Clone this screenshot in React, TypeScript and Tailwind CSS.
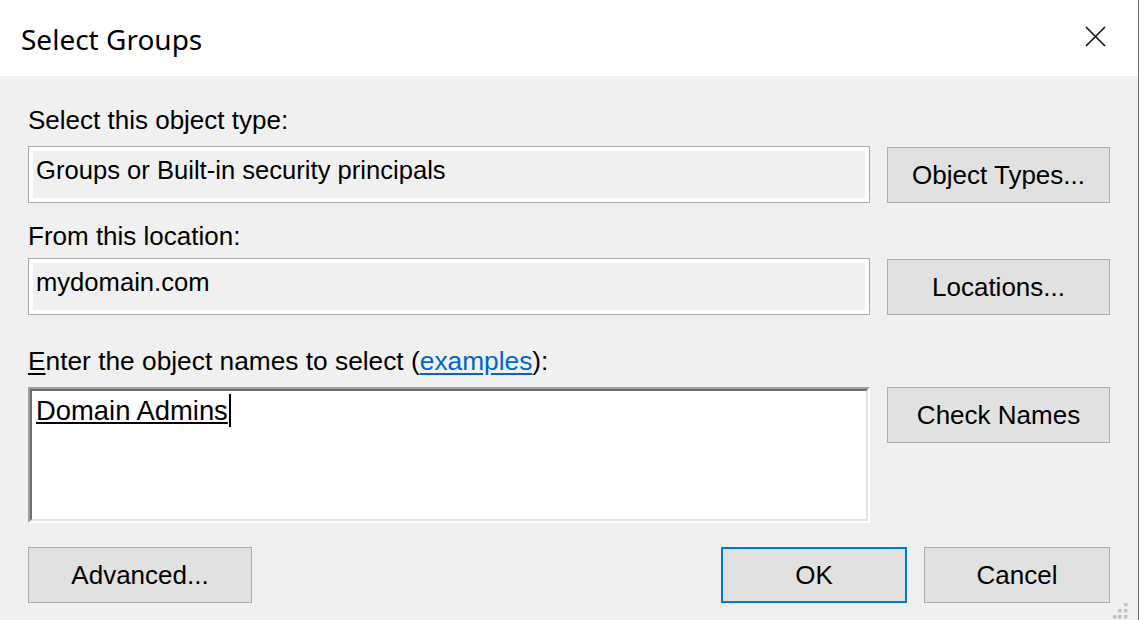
import React from "react";

const btn =
  "flex items-center justify-center border border-[#adadad] bg-[#e1e1e1] text-black";

function CloseIcon() {
  return (
    <svg width="21" height="21" viewBox="0 0 21 21" fill="none">
      <path d="M1 1L20 20M20 1L1 20" stroke="#111" strokeWidth="1.6" />
    </svg>
  );
}

function ResizeGrip() {
  const dots = [
    [11, 0],
    [5, 6],
    [11, 6],
    [0, 12],
    [5, 12],
    [11, 12],
  ];
  return (
    <svg width="15" height="16" viewBox="0 0 15 16" className="absolute bottom-[1px] right-[10px]">
      {dots.map(([x, y], i) => (
        <rect key={i} x={x} y={y} width="3.5" height="3.5" fill="#c2c2c2" />
      ))}
    </svg>
  );
}

function ReadOnlyField({ value }: { value: string }) {
  return (
    <div className="h-[57px] w-[842px] border border-[#a9a9a9]">
      <div className="h-full border-4 border-white bg-[#f0f0f0] pl-[3px] pt-[4px] text-[25.6px] leading-[30px]">
        {value}
      </div>
    </div>
  );
}

export default function App() {
  return (
    <div className="flex h-[620px] w-[1140px] overflow-hidden bg-white font-['Liberation_Sans',Arial,sans-serif] text-[26px] text-black">
      <div className="relative flex h-full w-[1139px] flex-col border-r border-[#6b6b6b] bg-[#f0f0f0]">
        {/* Title bar */}
        <div className="flex h-[76px] shrink-0 items-start justify-between bg-white pl-[21px] pr-[32px]">
          <div className="pt-[21px] font-['Segoe_UI','Noto_Sans',sans-serif] text-[28px] leading-[36px]">
            Select Groups
          </div>
          <div className="pt-[26px]">
            <CloseIcon />
          </div>
        </div>

        {/* Body */}
        <div className="flex flex-col px-[28px] pt-[29px]">
          <div className="h-[30px] leading-[30px]">Select this object type:</div>
          <div className="mt-[11px] flex gap-[17px]">
            <ReadOnlyField value="Groups or Built-in security principals" />
            <button className={`${btn} mt-[1px] h-[56px] w-[223px]`}>Object Types...</button>
          </div>

          <div className="mt-[18px] h-[30px] leading-[30px]">From this location:</div>
          <div className="mt-[7px] flex gap-[17px]">
            <ReadOnlyField value="mydomain.com" />
            <button className={`${btn} mt-[1px] h-[56px] w-[223px]`}>Locations...</button>
          </div>

          <div className="mt-[31px] h-[30px] text-[26.3px] leading-[30px]">
            <span className="underline underline-offset-[3px]">E</span>nter the object names to select (
            <span className="text-[#0066cc] underline underline-offset-[3px]">examples</span>):
          </div>
          <div className="mt-[11px] flex items-start gap-[17px]">
            <div className="h-[136px] w-[842px] border-2 border-b-white border-l-[#a0a0a0] border-r-white border-t-[#a0a0a0]">
              <div className="h-full border-2 border-b-[#e3e3e3] border-l-[#6d6d6d] border-r-[#e3e3e3] border-t-[#6d6d6d] bg-white pl-[4px] pt-[4px]">
                <div className="flex items-start text-[27.4px] leading-[31px]">
                  <span className="underline underline-offset-[2px]">Domain Admins</span>
                  <span className="ml-[1px] mt-[-1px] h-[33px] w-[2px] bg-black" />
                </div>
              </div>
            </div>
            <button className={`${btn} h-[56px] w-[223px]`}>Check Names</button>
          </div>

          <div className="mt-[24px] flex items-start">
            <button className={`${btn} h-[56px] w-[224px]`}>Advanced...</button>
            <div className="flex-1" />
            <button className="flex h-[56px] w-[186px] items-center justify-center border-2 border-[#0078d7] bg-[#e1e1e1] text-black">
              OK
            </button>
            <button className={`${btn} ml-[17px] h-[56px] w-[186px]`}>Cancel</button>
          </div>
        </div>

        <ResizeGrip />
      </div>
      <div className="h-full w-[1px] bg-white" />
    </div>
  );
}
